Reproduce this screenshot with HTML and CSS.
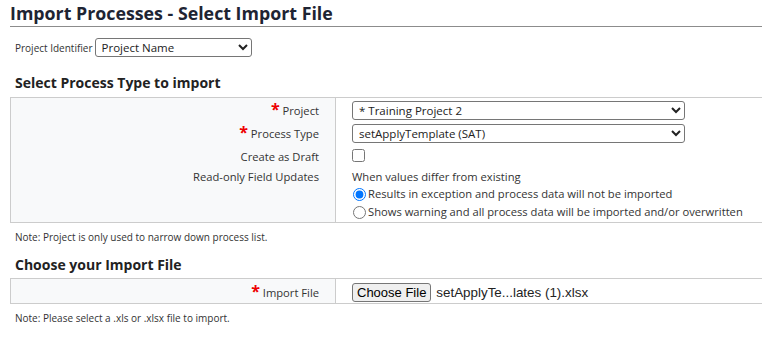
FILE: index.html
```html
<!DOCTYPE html>
<html lang="en">
<head>
  <meta charset="UTF-8" />
  <title>Import Processes</title>
  <link rel="stylesheet" href="styles.css">
</head>
<body>
  <h1 class="page-title">Import Processes - Select Import File</h1>

  <div class="identifier">
    <label for="projectIdentifier">Project Identifier</label>
    <select id="projectIdentifier" class="id-select">
      <option>Project Name</option>
    </select>
  </div>

  <h2 class="section-title">Select Process Type to import</h2>
  <table class="form-table">
    <tr>
      <th><span class="req">*</span> Project</th>
      <td>
        <select class="wide-select">
          <option>* Training Project 2</option>
        </select>
      </td>
    </tr>
    <tr>
      <th><span class="req">*</span> Process Type</th>
      <td>
        <select class="wide-select">
          <option>setApplyTemplate (SAT)</option>
        </select>
      </td>
    </tr>
    <tr>
      <th>Create as Draft</th>
      <td><input type="checkbox" class="draft-check"></td>
    </tr>
    <tr class="top-row">
      <th>Read-only Field Updates</th>
      <td>
        <div class="hint">When values differ from existing</div>
        <label class="radio-line"><input type="radio" name="ro" checked>Results in exception and process data will not be imported</label>
        <label class="radio-line"><input type="radio" name="ro">Shows warning and all process data will be imported and/or overwritten</label>
      </td>
    </tr>
  </table>
  <p class="note">Note: Project is only used to narrow down process list.</p>

  <h2 class="section-title second">Choose your Import File</h2>
  <table class="form-table">
    <tr>
      <th><span class="req">*</span> Import File</th>
      <td class="file-cell">
        <button class="file-btn">Choose File</button>
        <span class="file-name">setApplyTe...lates (1).xlsx</span>
      </td>
    </tr>
  </table>
  <p class="note">Note: Please select a .xls or .xlsx file to import.</p>
</body>
</html>
```

FILE: styles.css
```css
body {
  margin: 0;
  padding: 0 0 0 10px;
  font-family: "Open Sans", "Noto Sans", sans-serif;
  color: #333;
  background: #fff;
}
.page-title {
  margin: 0;
  padding: 1px 0 1px;
  font-size: 17.8px;
  line-height: 24px;
  color: #1e2433;
  border-bottom: 1px solid #8c8c8c;
}
.identifier {
  display: flex;
  align-items: center;
  gap: 2px;
  margin: 11px 0 0 5px;
  font-size: 10px;
}
.id-select {
  width: 157px;
  height: 19px;
  font-family: inherit;
  font-size: 11.5px;
  color: #222;
  border: 1px solid #767676;
  border-radius: 3px;
  background: #fff;
  padding: 0 2px;
}
.section-title {
  margin: 16px 0 4px 5px;
  font-size: 14px;
  line-height: 20px;
  color: #222;
}
.section-title.second {
  margin-top: 11px;
  margin-bottom: 3px;
}
.form-table {
  width: 100%;
  border-collapse: collapse;
  border: 1px solid #ccc;
  border-right: none;
  font-size: 11.2px;
}
.form-table th {
  width: 308px;
  padding: 3px 16px 1px 0;
  text-align: right;
  font-weight: normal;
  color: #333;
  background-color: #f8f9fa;
  border-right: 1px solid #ccc;
  vertical-align: middle;
  white-space: nowrap;
}
.form-table td {
  padding: 3px 4px 1px 16px;
  vertical-align: middle;
  white-space: nowrap;
}
.form-table .top-row th {
  vertical-align: top;
}
.req {
  color: #e00;
  font-size: 16px;
  font-weight: bold;
  line-height: 12px;
}
.wide-select {
  width: 333px;
  height: 19px;
  font-family: inherit;
  font-size: 11.5px;
  color: #222;
  border: 1px solid #767676;
  border-radius: 3px;
  background: #fff;
  padding: 0 2px;
}
.draft-check {
  margin: 2px 0;
  width: 13px;
  height: 13px;
}
.hint {
  line-height: 16px;
}
.radio-line {
  display: flex;
  align-items: center;
  line-height: 18px;
}
.radio-line input {
  margin: 0 2px 0 1px;
  width: 13px;
  height: 13px;
}
.note {
  margin: 7px 0 0 5px;
  font-size: 10px;
  color: #333;
}
.file-cell {
  height: 20px;
}
.file-btn {
  height: 19px;
  font-family: "Liberation Sans", Arial, sans-serif;
  font-size: 13px;
  padding: 0 4px;
  background: #efefef;
  border: 1px solid #767676;
  border-radius: 3px;
  color: #000;
  vertical-align: middle;
}
.file-name {
  margin-left: 2px;
  font-family: "Liberation Sans", Arial, sans-serif;
  font-size: 13.4px;
  color: #222;
  vertical-align: middle;
}
```
